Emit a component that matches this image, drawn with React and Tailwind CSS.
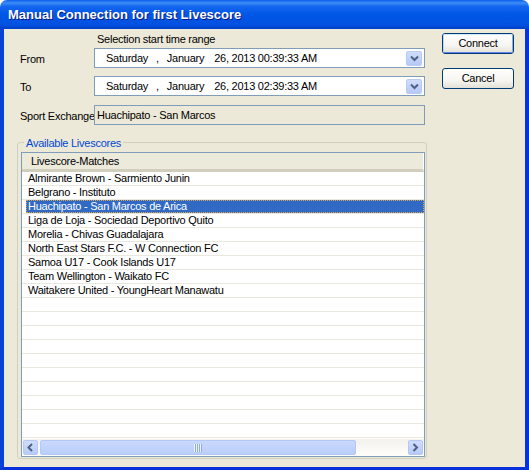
import React from 'react';

const font = { fontFamily: '"Liberation Sans", Arial, sans-serif', letterSpacing: '-0.25px' };

const matches = [
  'Almirante Brown - Sarmiento Junin',
  'Belgrano - Instituto',
  'Huachipato - San Marcos de Arica',
  'Liga de Loja - Sociedad Deportivo Quito',
  'Morelia - Chivas Guadalajara',
  'North East Stars F.C. - W Connection FC',
  'Samoa U17 - Cook Islands U17',
  'Team Wellington - Waikato FC',
  'Waitakere United - YoungHeart Manawatu',
];

const Chevron = ({ dir = 'down' }) => {
  const d = {
    down: 'M1 1.5 L4.5 5 L8 1.5',
    left: 'M5 1 L1.5 4.5 L5 8',
    right: 'M1.5 1 L5 4.5 L1.5 8',
  }[dir];
  const box = dir === 'down' ? '0 0 9 7' : '0 0 7 9';
  return (
    <svg viewBox={box} className={dir === 'down' ? 'w-[9px] h-[7px]' : 'w-[7px] h-[9px]'}>
      <path d={d} fill="none" stroke="#4D6185" strokeWidth="2" />
    </svg>
  );
};

const XpButton = ({ children, isDefault }) => (
  <button className="w-[72px] h-[21px] rounded-[3px] border border-[#003C74] bg-[linear-gradient(to_bottom,#FFFFFF_0%,#F6F5F1_60%,#E3E1D6_100%)] p-0">
    <div
      className={
        isDefault
          ? 'h-full w-full rounded-[2px] border border-t-[#CEE7FF] border-l-[#BCD4F6] border-r-[#89ADE4] border-b-[#6982EE] flex items-center justify-center text-[11px] text-black'
          : 'h-full w-full flex items-center justify-center text-[11px] text-black'
      }
    >
      {children}
    </div>
  </button>
);

const DateBox = ({ time }) => (
  <div className="w-[331px] h-[20px] bg-white border border-[#7F9DB9] flex items-center pl-[11px] pr-[2px] text-[11px] text-black">
    <span>Saturday</span>
    <span className="ml-[8px]">,</span>
    <span className="ml-[8px]">January</span>
    <span className="ml-[10px]">26, 2013 {time} AM</span>
    <div className="ml-auto w-[16px] h-[15px] rounded-[2px] border border-[#B9CBF3] bg-[linear-gradient(to_bottom,#CFDCFB,#B6C9F6)] flex items-center justify-center">
      <Chevron />
    </div>
  </div>
);

export default function App() {
  const rows = [...matches, ...Array(12).fill('')];
  return (
    <div className="w-[529px] h-[470px] flex flex-col bg-white select-none" style={font}>
      {/* Title bar */}
      <div className="h-[29px] shrink-0 rounded-t-[7px] bg-[linear-gradient(to_bottom,#0A5FEA_0%,#3D8CF7_10%,#1466EE_22%,#0057E6_50%,#0251E0_85%,#003FC6_100%)] flex items-center pl-[8px]">
        <span className="text-white font-bold text-[13px] [text-shadow:1px_1px_#0A1883] tracking-[0px]">
          Manual Connection for first Livescore
        </span>
      </div>

      {/* Body */}
      <div className="flex-1 flex bg-[#ECE9D8] border-l-4 border-r-4 border-b-[3px] border-l-[#0841D6] border-r-[#0831D9] border-b-[#0831D9]">
        <div className="ml-[13px] w-[410px] flex flex-col">
          <div className="h-[19px] pl-[80px] text-[11px] leading-[20px] text-black">Selection start time range</div>

          <div className="flex items-center h-[20px]">
            <div className="w-[77px] pl-[3px] pt-[2px] text-[11px] text-black">From</div>
            <DateBox time="00:39:33" />
          </div>

          <div className="flex items-center h-[20px] mt-[8px]">
            <div className="w-[77px] pl-[3px] pt-[2px] text-[11px] text-black">To</div>
            <DateBox time="02:39:33" />
          </div>

          <div className="flex items-center h-[20px] mt-[9px]">
            <div className="w-[77px] pl-[3px] pt-[2px] text-[11px] text-black whitespace-nowrap overflow-hidden">Sport Exchange</div>
            <div className="w-[331px] h-[20px] border border-[#7F9DB9] bg-[#ECE9D8] pl-[2px] flex items-center text-[11px] text-black">
              Huachipato - San Marcos
            </div>
          </div>

          {/* Group box */}
          <div className="relative mt-[17px] h-[317px] rounded-[3px] border border-[#D0D0BF] pt-[9px] pl-[3px] pr-[1px] pb-[1px]">
            <span className="absolute left-[6px] top-[-8px] bg-[#ECE9D8] px-[2px] text-[11px] text-[#0046D5]">
              Available Livescores
            </span>

            {/* List view */}
            <div className="h-full border border-[#7F9DB9] bg-white flex flex-col">
              <div className="h-[19px] shrink-0 bg-[#EBEADB] border-b-[3px] border-b-[#D2CEBE] border-r border-r-white flex items-center pl-[9px] text-[11px] text-black">
                Livescore-Matches
              </div>
              <div className="flex-1 overflow-hidden">
                {rows.map((m, i) => (
                  <div key={i} className="h-[14px] border-b border-[#EAE8DC] flex">
                    <div
                      className={
                        i === 2
                          ? 'ml-[4px] flex-1 bg-[#316AC5] text-white outline-1 outline-dotted outline-[#D8A658] -outline-offset-1 pl-[2px] text-[11px] leading-[13px]'
                          : 'ml-[4px] flex-1 text-black pl-[2px] text-[11px] leading-[13px]'
                      }
                    >
                      {m}
                    </div>
                  </div>
                ))}
              </div>

              {/* Horizontal scrollbar */}
              <div className="h-[17px] shrink-0 bg-[linear-gradient(to_bottom,#F3F1EC,#FEFEFB)] flex items-center px-[1px] gap-[2px]">
                <div className="w-[15px] h-[15px] rounded-[2px] border border-[#B4C8F6] bg-[linear-gradient(to_bottom,#D0DCFC,#B7CBF8)] flex items-center justify-center">
                  <Chevron dir="left" />
                </div>
                <div className="w-[316px] h-[15px] rounded-[2px] border border-[#B4C8F6] bg-[linear-gradient(to_bottom,#CAD8FC,#B9CFFA)] flex items-center justify-center">
                  <svg viewBox="0 0 8 8" className="w-[8px] h-[8px]">
                    <path d="M0.5 0 V8 M2.5 0 V8 M4.5 0 V8 M6.5 0 V8" stroke="#EEF4FE" strokeWidth="1" />
                    <path d="M1.5 0 V8 M3.5 0 V8 M5.5 0 V8 M7.5 0 V8" stroke="#8CAAEC" strokeWidth="1" />
                  </svg>
                </div>
                <div className="ml-auto w-[15px] h-[15px] rounded-[2px] border border-[#B4C8F6] bg-[linear-gradient(to_bottom,#D0DCFC,#B7CBF8)] flex items-center justify-center">
                  <Chevron dir="right" />
                </div>
              </div>
            </div>
          </div>
        </div>

        {/* Buttons */}
        <div className="ml-[15px] pt-[4px] flex flex-col gap-[14px]">
          <XpButton isDefault>Connect</XpButton>
          <XpButton>Cancel</XpButton>
        </div>
      </div>
    </div>
  );
}
